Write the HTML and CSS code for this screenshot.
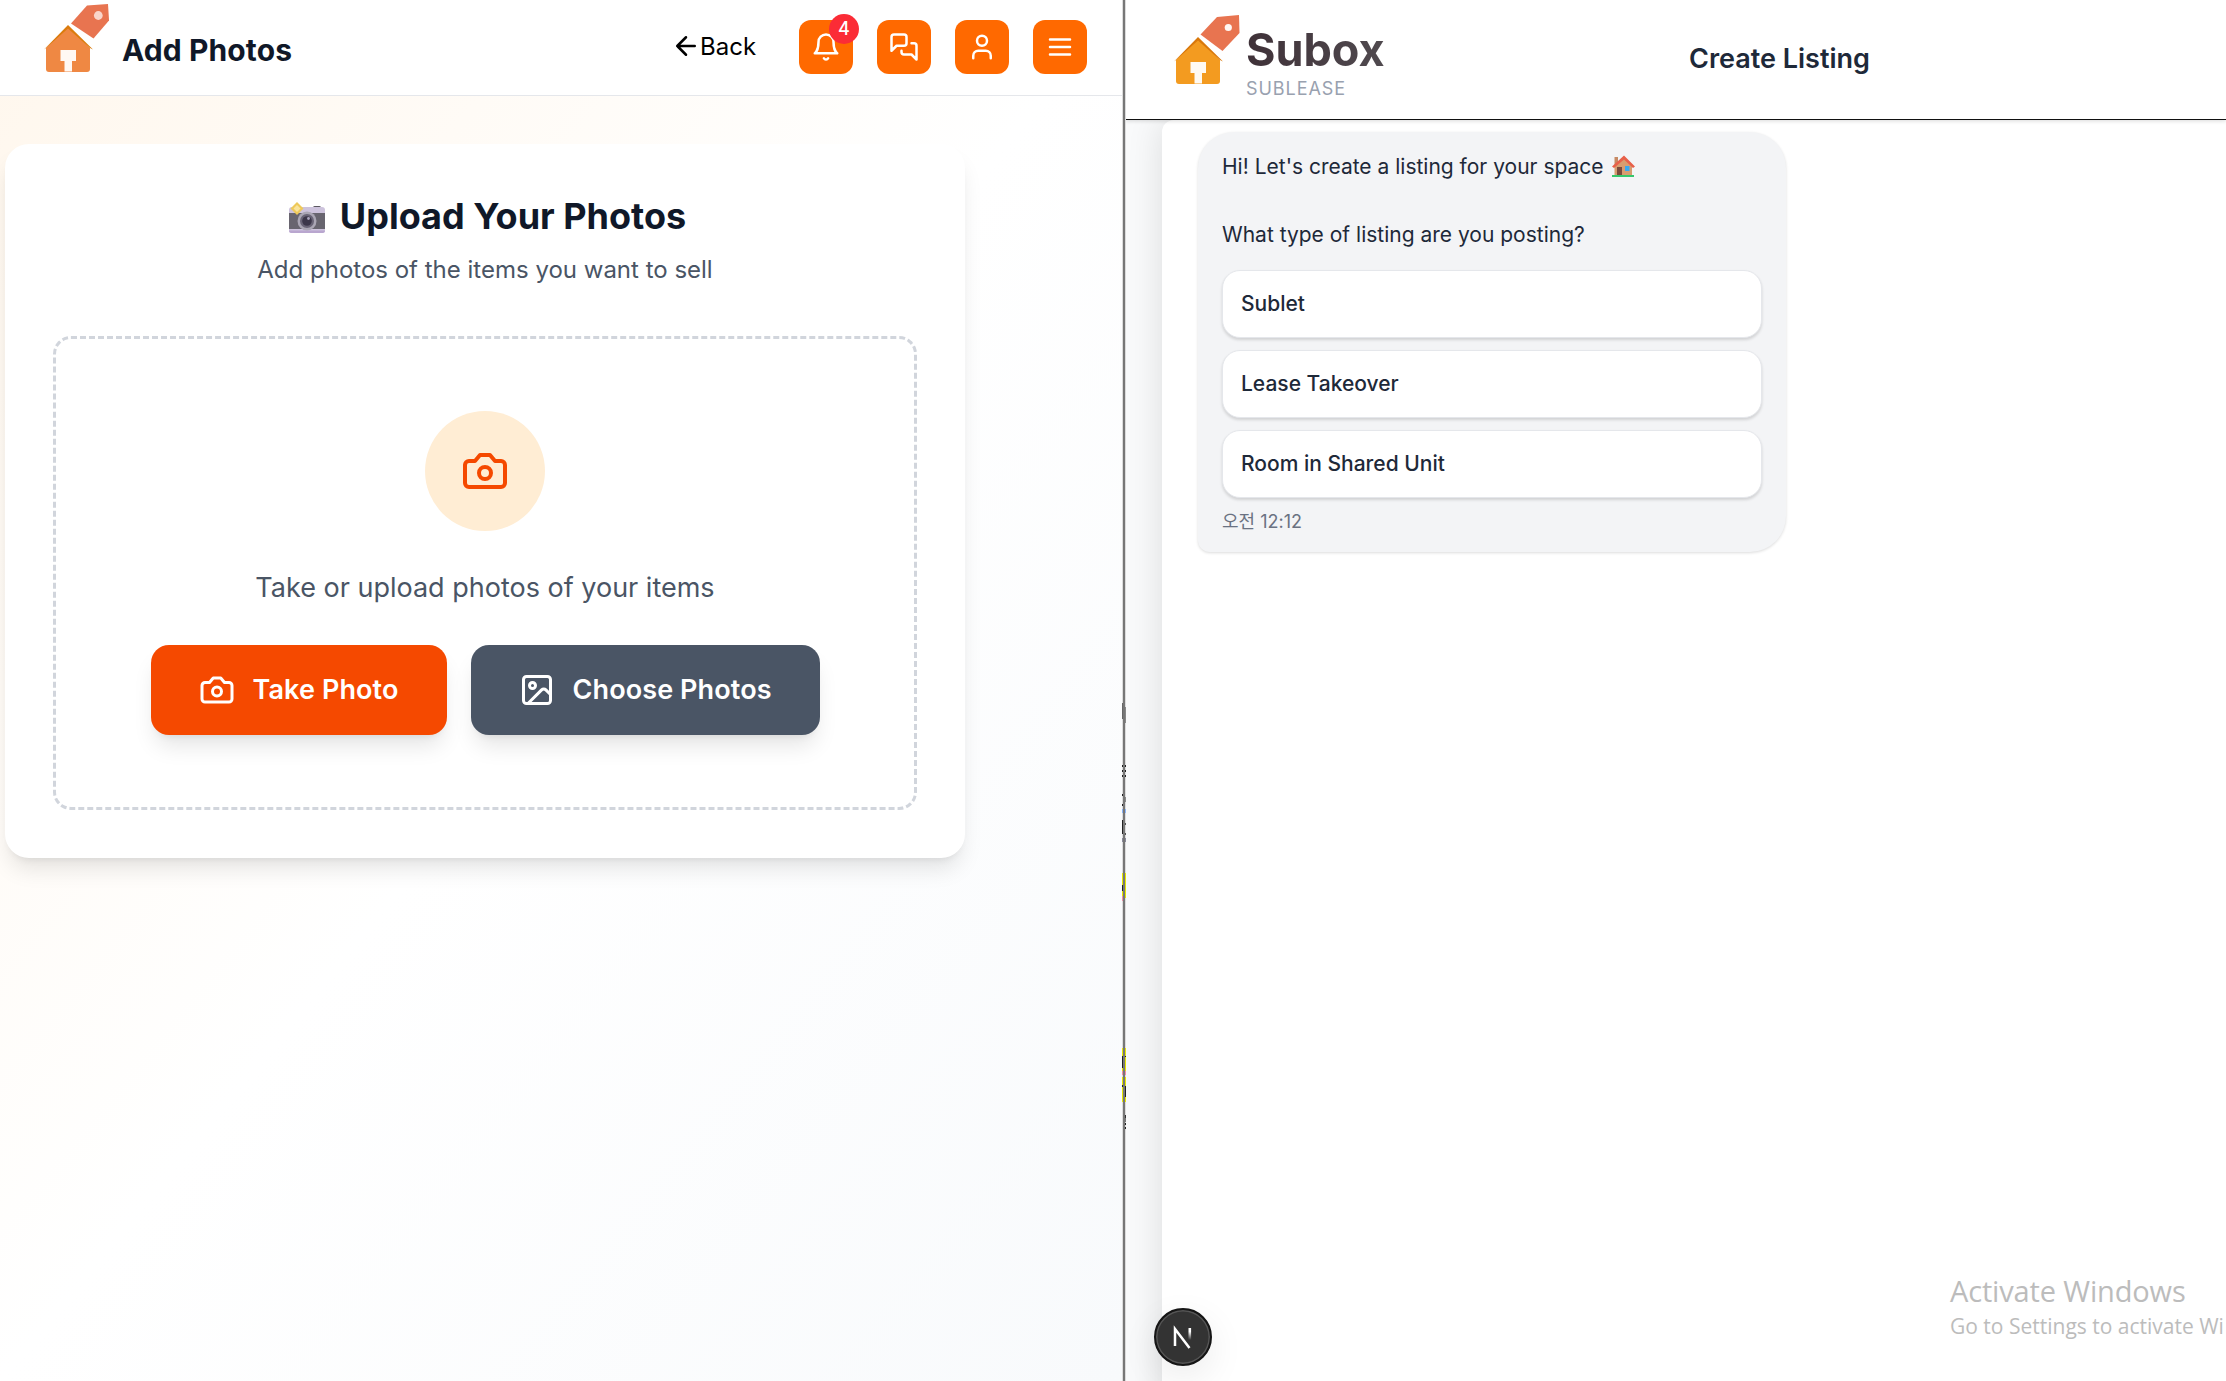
FILE: index.html
```html
<!DOCTYPE html>
<html lang="en">
<head>
<meta charset="utf-8">
<title>Subox</title>
<link rel="stylesheet" href="styles.css">
</head>
<body>
<svg class="defs" width="0" height="0">
  <defs>
    <symbol id="camera" viewBox="0 0 24 24"><path d="M14.5 4h-5L7 7H4a2 2 0 0 0-2 2v9a2 2 0 0 0 2 2h16a2 2 0 0 0 2-2V9a2 2 0 0 0-2-2h-3l-2.5-3z"/><circle cx="12" cy="13" r="3"/></symbol>
  </defs>
</svg>
<div class="screen">
  <section class="pane pane-left">
    <header class="topbar">
      <svg class="logo" width="70" height="72" viewBox="0 0 70 72">
        <path fill="#ef8843" d="M24 26 46 48V69a3 3 0 0 1-3 3H5a3 3 0 0 1-3-3V48z"/>
        <path fill="#db7c0d" d="M24 25 49 49.500 46 48 24 28.500 2 48 0 49.500z"/>
        <path fill="#fff8f3" d="M16.500 50h15.500v11h-4v10.500h-7.500V61h-4z"/>
        <path fill="#e87450" d="M27 23.500 43 5.500 64 4 65 20.500 49.500 38.500z"/>
        <circle cx="54.300" cy="15.500" r="4.400" fill="#f9d5ca"/>
      </svg>
      <h1 class="title">Add Photos</h1>
      <a class="back"><svg class="icon" width="30" height="30" viewBox="0 0 24 24"><path d="m12 19-7-7 7-7M19 12H5"/></svg>Back</a>
      <nav class="actions">
        <button class="action"><svg class="icon" width="30" height="30" viewBox="0 0 24 24"><path d="M6 8a6 6 0 0 1 12 0c0 7 3 9 3 9H3s3-2 3-9M10.300 21a1.940 1.940 0 0 0 3.400 0"/></svg><span class="badge">4</span></button>
        <button class="action"><svg class="icon" width="30" height="30" viewBox="0 0 24 24"><path d="M14 9a2 2 0 0 1-2 2H6l-4 4V4a2 2 0 0 1 2-2h8a2 2 0 0 1 2 2zM18 9h2a2 2 0 0 1 2 2v11l-4-4h-6a2 2 0 0 1-2-2v-1"/></svg></button>
        <button class="action"><svg class="icon" width="30" height="30" viewBox="0 0 24 24"><path d="M19 21v-2a4 4 0 0 0-4-4H9a4 4 0 0 0-4 4v2"/><circle cx="12" cy="7" r="4"/></svg></button>
        <button class="action"><svg class="icon" width="30" height="30" viewBox="0 0 24 24"><path d="M4 6h16M4 12h16M4 18h16"/></svg></button>
      </nav>
    </header>
    <main class="stage">
      <div class="card">
        <h2 class="heading">
          <svg class="emoji-camera" width="38" height="32" viewBox="0 0 38 32">
            <rect x="25" y="1" width="8" height="4" rx="1.500" fill="#5b5860"/>
            <rect x="1" y="2" width="36" height="26" rx="3" fill="#cdc3dc"/>
            <path fill="#68656f" d="M1 8h36v16H1z"/>
            <path fill="#b9a6cf" d="M1 25.500h36a2.500 2.500 0 0 1-2.500 2.500h-31A2.500 2.500 0 0 1 1 25.500z"/>
            <circle cx="19" cy="16" r="9.500" fill="#aaa6b4"/><circle cx="19" cy="16" r="7" fill="#6a6577"/><circle cx="19" cy="16" r="4.800" fill="#3c374a"/><circle cx="20.500" cy="13.500" r="1.400" fill="#aaa4bb"/>
            <path fill="#eec95a" d="M9-3 15.500 3.500 9 10 2.500 3.500z"/><path fill="#fae49b" d="M9 0 12.500 3.500 9 7 5.500 3.500z"/>
          </svg>
          <span>Upload Your Photos</span>
        </h2>
        <p class="sub">Add photos of the items you want to sell</p>
        <div class="dropzone">
          <div class="disc"><svg class="icon" width="48" height="48"><use href="#camera"/></svg></div>
          <p class="hint">Take or upload photos of your items</p>
          <div class="buttons">
            <button class="btn btn-take"><svg class="icon" width="36" height="36"><use href="#camera"/></svg><span>Take Photo</span></button>
            <button class="btn btn-choose"><svg class="icon" width="36" height="36" viewBox="0 0 24 24"><rect x="3" y="3" width="18" height="18" rx="2"/><circle cx="9" cy="9" r="2"/><path d="m21 15-3.090-3.090a2 2 0 0 0-2.820 0L6 21"/></svg><span>Choose Photos</span></button>
          </div>
        </div>
      </div>
    </main>
  </section>

  <div class="divider"><i class="edge edge-left"></i><i class="bar"></i><i class="edge edge-right"></i></div>

  <section class="pane pane-right">
    <header class="masthead">
      <svg class="logo" width="70" height="84" viewBox="0 -12 70 84">
        <path fill="#f39b20" d="M24 26 46 48V69a3 3 0 0 1-3 3H5a3 3 0 0 1-3-3V48z"/>
        <path fill="#d9780b" d="M24 25 49 49.500 46 48 24 28.500 2 48 0 49.500z"/>
        <path fill="#fffaf3" d="M16.500 50h15.500v11h-4v10.500h-7.500V61h-4z"/>
        <path fill="#e87450" d="M26.500 22.500 43 5 65 3 65.500 21 48.500 39z"/>
        <circle cx="54.300" cy="15.500" r="3.600" fill="#fff7f3"/>
      </svg>
      <div class="brand"><div class="name">Subox</div><div class="tag">SUBLEASE</div></div>
      <h1 class="page-title">Create Listing</h1>
    </header>
    <main class="chat">
      <div class="panel">
        <div class="bubble">
          <p>Hi! Let's create a listing for your space
            <svg class="emoji-house" width="24" height="22" viewBox="0 0 24 22">
              <path fill="#c68a64" d="M3.500 1H7v8H3.500z"/><path fill="#d79d70" d="M3.500 10 13 2l8 8v10h-17.500z"/>
              <path fill="#e8604a" d="M13-.500 24 10.500 22 12 13 3.500 3 12 1 10.500z"/>
              <path fill="#7b4a3c" d="M6 11h5v9H6z"/><path fill="#38a8f0" d="M14 10h4.500v5H14z"/><path fill="#36c76c" d="M1 19h22v2H1z"/>
            </svg></p>
          <p class="question">What type of listing are you posting?</p>
          <button class="option">Sublet</button>
          <button class="option">Lease Takeover</button>
          <button class="option">Room in Shared Unit</button>
          <time class="time">오전 12:12</time>
        </div>
      </div>
    </main>
    <div class="dev-badge"><svg width="22" height="24" viewBox="0 0 22 24">
      <defs><linearGradient id="fade" x1="0" y1="0" x2="0" y2="1"><stop offset=".3" stop-color="#fff"/><stop offset="1" stop-color="#fff" stop-opacity="0"/></linearGradient></defs>
      <path d="M3 21V4l14.500 19" fill="none" stroke="#fff" stroke-width="2.500"/><path d="M16.500 3h2.600v12h-2.600z" fill="url(#fade)"/></svg></div>
    <div class="watermark"><div class="wm-title">Activate Windows</div><div class="wm-text">Go to Settings to activate Wi</div></div>
  </section>
</div>
</body>
</html>
```
FILE: styles.css
```css
* { box-sizing: border-box; }
body { margin: 0; font-family: Inter, "Noto Sans CJK KR", sans-serif; color: #101828; overflow: hidden; }
h1, h2, p { margin: 0; }
button { border: 0; font: inherit; padding: 0; }
svg { display: block; overflow: visible; flex: none; }
.defs { position: absolute; }
.icon { fill: none; stroke: currentColor; stroke-width: 2; stroke-linecap: round; stroke-linejoin: round; }
.screen { display: flex; width: 2226px; height: 1381px; overflow: hidden; }
.pane { display: flex; flex-direction: column; height: 100%; overflow: hidden; }
.pane-left { width: 1122px; background: linear-gradient(to bottom right, #fff7ed, #fff 50%, #f8fafc); }

.topbar { display: flex; height: 96px; flex: none; padding-left: 44px; background: #fff; border-bottom: 1px solid #e5e7eb; }
.title { width: 554px; margin-left: 8px; padding-top: 32px; font-size: 30px; line-height: 36px; font-weight: 700; letter-spacing: .1px; white-space: nowrap; }
.back { display: flex; align-items: center; width: 123px; height: 54px; margin-top: 19px; font-size: 24px; color: #000; }
.back svg { margin-right: -1px; margin-left: -5px; }
.actions { display: flex; gap: 24px; padding-top: 20px; }
.action { position: relative; display: grid; place-items: center; width: 54px; height: 54px; border-radius: 12px; background: #ff6900; color: #fff; }
.badge { position: absolute; top: -6px; right: -6px; width: 30px; height: 30px; border-radius: 50%; background: #fb2c36; font-size: 18px; line-height: 30px; font-weight: 500; text-align: center; }

.stage { padding: 48px 0 0 5px; }
.card { width: 960px; height: 714px; padding: 48px; border-radius: 24px; background: #fff; box-shadow: 0 15px 22px -4px rgba(0,0,0,.1), 0 6px 9px -6px rgba(0,0,0,.1); }
.heading { display: flex; justify-content: center; align-items: center; gap: 14px; height: 48px; padding-left: 4px; font-size: 36px; font-weight: 700; }
.emoji-camera { margin-top: 10px; }
.sub { margin-top: 12px; text-align: center; font-size: 24px; line-height: 36px; color: #4a5565; }
.dropzone { display: flex; flex-direction: column; align-items: center; height: 474px; margin-top: 48px; padding-top: 72px; border: 3px dashed #d1d5dc; border-radius: 18px; }
.disc { display: grid; place-items: center; width: 120px; height: 120px; border-radius: 50%; background: #ffedd4; color: #f54900; }
.hint { margin-top: 36px; font-size: 27px; line-height: 42px; color: #4a5565; }
.buttons { display: flex; gap: 24px; margin-top: 36px; }
.btn { display: flex; align-items: center; gap: 18px; height: 90px; padding: 0 0 1px 48px; border-radius: 18px; color: #fff; font-size: 27px; font-weight: 600; letter-spacing: .1px; white-space: nowrap; box-shadow: 0 15px 22px -4px rgba(0,0,0,.1), 0 6px 9px -6px rgba(0,0,0,.1); }
.btn-take { width: 296px; background: #f54900; }
.btn-choose { width: 349px; background: #4a5565; }

.divider { display: flex; width: 4px; height: 100%; }
.edge { width: 1px; background: #dcdcdc; }
.bar { width: 2px; background: #777; }
.edge-left { background: linear-gradient(#dcdcdc 703px, #666 703px 719px, #dcdcdc 719px 765px, #222 765px 767px, #dcdcdc 767px 770px, #222 770px 772px, #dcdcdc 772px 775px, #222 775px 777px, #dcdcdc 777px 794px, #222 794px 796px, #dcdcdc 796px 804px, #222 804px 806px, #dcdcdc 806px 809px, #8ab4f8 809px 813px, #dcdcdc 813px 820px, #222 820px 834px, #dcdcdc 834px 838px, #889 838px 842px, #dcdcdc 842px 873px, #e8e800 873px 885px, #222 885px 891px, #e8e800 891px 896px, #ef8da5 896px 901px, #dcdcdc 901px 1048px, #e8e800 1048px 1056px, #222 1056px 1068px, #e8e800 1068px 1071px, #ef8da5 1071px 1075px, #dcdcdc 1075px 1077px, #e8e800 1077px 1085px, #222 1085px 1087px, #e8e800 1087px 1102px, #dcdcdc 1102px); }
.edge-right { background: linear-gradient(#dcdcdc 707px, #888 707px 723px, #dcdcdc 723px 765px, #222 765px 767px, #dcdcdc 767px 770px, #222 770px 772px, #dcdcdc 772px 775px, #222 775px 777px, #dcdcdc 777px 797px, #888 797px 802px, #dcdcdc 802px 809px, #8ab4f8 809px 813px, #dcdcdc 813px 823px, #555 823px 825px, #dcdcdc 825px 833px, #555 833px 835px, #dcdcdc 835px 838px, #889 838px 842px, #dcdcdc 842px 873px, #e8e800 873px 898px, #dcdcdc 898px 1048px, #e8e800 1048px 1056px, #222 1056px 1057px, #e8e800 1057px 1071px, #ef8da5 1071px 1075px, #dcdcdc 1075px 1077px, #e8e800 1077px 1086px, #222 1086px 1097px, #e8e800 1097px 1102px, #dcdcdc 1102px 1115px, #333 1115px 1118px, #777 1118px 1122px, #dcdcdc 1122px 1123px, #222 1123px 1125px, #dcdcdc 1125px 1127px, #222 1127px 1129px, #dcdcdc 1129px); }

.pane-right { position: relative; width: 1100px; background: #fff; }
.masthead { position: relative; z-index: 1; display: flex; flex: none; height: 120px; padding-left: 48px; background: #fff; border-bottom: 1px solid #111; box-shadow: 0 1px 4px rgba(0,0,0,.15); }
.brand { width: 445px; padding: 23px 0 0 2px; }
.name { font-size: 45px; line-height: 54px; font-weight: 700; color: transparent; background: linear-gradient(90deg, #3f3138, #504a4f 140px); background-clip: text; }
.tag { margin-top: 1px; font-size: 18px; line-height: 22px; letter-spacing: .95px; color: #99a1af; }
.page-title { padding-top: 42px; font-size: 27px; line-height: 33px; font-weight: 600; color: #1e2939; white-space: nowrap; }
.chat { flex: 1; padding-left: 36px; background: #f9fafb; }
.panel { height: 1400px; padding: 12px 0 0 36px; border-radius: 12px 0 0 0; background: #fff; box-shadow: 0 0 36px rgba(0,0,0,.12); }
.bubble { width: 588px; height: 420px; padding: 18px 24px; border-radius: 36px 36px 36px 12px; background: #f3f4f6; box-shadow: 0 1px 3px rgba(0,0,0,.14); color: #1e2939; font-size: 21px; line-height: 34px; }
.emoji-house { display: inline-block; vertical-align: -4px; margin-left: 1px; }
.question { margin: 34px 0 18px; }
.option { display: block; width: 540px; height: 68px; margin-bottom: 12px; padding: 0 18px; border: 1px solid #e5e7eb; border-radius: 18px; background: #fff; color: #1e2939; font-weight: 500; text-align: left; box-shadow: 0 2px 3px rgba(0,0,0,.14); }
.time { display: block; font-size: 18px; line-height: 24px; color: #6a7282; }
.dev-badge { position: absolute; left: 28px; top: 1308px; z-index: 2; display: grid; place-items: center; width: 58px; height: 58px; border: 2px solid #151515; border-radius: 50%; background: #333; box-shadow: inset 0 0 0 1.500px #555, 0 12px 36px rgba(0,0,0,.08); }
.watermark { position: absolute; left: 824px; top: 1271px; z-index: 2; color: #bcbcbc; font-family: "Open Sans", sans-serif; white-space: nowrap; }
.wm-title { font-size: 29px; line-height: 40px; letter-spacing: -.15px; }
.wm-text { font-size: 21px; line-height: 30px; }
```
